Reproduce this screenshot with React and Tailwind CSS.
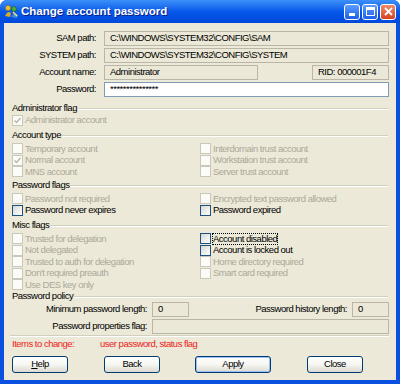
import clsx from "clsx";

const font = { fontFamily: '"Liberation Sans", Arial, sans-serif' };

function Field({ children, white, className }) {
  return (
    <div
      className={clsx(
        "flex h-[15px] items-center border pl-[5px] text-black",
        white ? "border-[#7f9db9] bg-white" : "border-[#b9b6a8] bg-[#ebe8d7]",
        className
      )}
    >
      {children}
    </div>
  );
}

function Check({ label, checked, disabled, focus }) {
  return (
    <div className="flex h-[11.5px] items-center">
      <span
        className={clsx(
          "flex h-[11px] w-[11px] shrink-0 items-center justify-center border",
          disabled
            ? "border-[#cac8bb] bg-[#fbfbf8]"
            : "border-[#1c5180] bg-gradient-to-br from-[#d8d8d2] to-white"
        )}
      >
        {checked ? (
          <svg width="7" height="7" viewBox="0 0 7 7">
            <path d="M0.5 3.5 L2.5 5.5 L6.5 1" fill="none" stroke={disabled ? "#b8b5a6" : "#21a121"} strokeWidth="1.4" />
          </svg>
        ) : null}
      </span>
      <span
        className={clsx(
          "ml-[2px] leading-[10px]",
          disabled ? "text-[#aca899]" : "text-black",
          focus && "outline outline-1 outline-dotted outline-offset-0 outline-black"
        )}
      >
        {label}
      </span>
    </div>
  );
}

function GroupHeader({ title, className }) {
  return (
    <div className={clsx("flex h-[11px] items-center pr-[1px]", className)}>
      <span className="text-black">{title}</span>
      <span className="ml-[1px] h-[2px] flex-1 border-t border-b border-t-[#d0d0bf] border-b-white" />
    </div>
  );
}

function XpButton({ children, wide, isDefault }) {
  return (
    <button
      className={clsx(
        "flex h-[17px] items-center justify-center rounded-[3px] border bg-gradient-to-b from-white via-[#f6f6f2] to-[#dcdad0] text-black",
        wide ? "w-[76px]" : "w-[56px]",
        isDefault ? "border-[#003c74] shadow-[inset_0_0_0_1px_#9fbef3]" : "border-[#003c74]"
      )}
    >
      {children}
    </button>
  );
}

function TitleIcon() {
  return (
    <svg width="15" height="15" viewBox="0 0 15 15">
      <circle cx="4" cy="4" r="2.6" fill="#e9c23c" stroke="#8a6a10" strokeWidth="0.6" />
      <path d="M1 12 Q4 6 7 9 L6 13 Z" fill="#d9a92c" />
      <circle cx="10" cy="5" r="2.4" fill="#4caf3a" stroke="#1d5f14" strokeWidth="0.6" />
      <path d="M7 13 Q10 7 14 11 L13 14 Z" fill="#3d8ad6" />
      <path d="M9 8 L13 12" stroke="#f4e27a" strokeWidth="1.4" />
    </svg>
  );
}

export default function App() {
  return (
    <div className="h-[384px] w-[400px] overflow-hidden text-[9.5px] tracking-[-0.5px]" style={font}>
      <div className="flex h-full flex-col rounded-t-[7px] bg-[#0a4fe0]">
        {/* title bar */}
        <div className="flex h-[23px] shrink-0 items-center rounded-t-[7px] bg-gradient-to-b from-[#3d8ff8] via-[#0758ea] to-[#0048da] pl-[4px] pr-[4px]">
          <TitleIcon />
          <span className="ml-[2px] text-[11.5px] font-bold tracking-[0px] text-white [text-shadow:1px_1px_0_#0a1f8a]">
            Change account password
          </span>
          <div className="ml-auto flex gap-[2px]">
            <span className="flex h-[16px] w-[16px] items-end justify-start rounded-[3px] border border-white bg-gradient-to-b from-[#5e9bff] to-[#1c5ee8] pb-[3px] pl-[4px]">
              <span className="h-[3px] w-[6px] bg-white" />
            </span>
            <span className="flex h-[16px] w-[16px] items-center justify-center rounded-[3px] border border-white bg-gradient-to-b from-[#5e9bff] to-[#1c5ee8]">
              <span className="h-[9px] w-[9px] border border-t-[3px] border-white" />
            </span>
            <span className="flex h-[16px] w-[16px] items-center justify-center rounded-[3px] border border-white bg-gradient-to-b from-[#ef8a6a] to-[#d5401c]">
              <svg width="9" height="9" viewBox="0 0 9 9">
                <path d="M1 1 L8 8 M8 1 L1 8" stroke="white" strokeWidth="1.8" />
              </svg>
            </span>
          </div>
        </div>

        {/* body */}
        <div className="mx-[4px] mb-[4px] flex flex-1 flex-col bg-[#ece9d8] pl-[8px] pr-[7px] pt-[8px]">
          {/* path fields */}
          <div className="grid grid-cols-[84px_1fr] gap-x-[8px] gap-y-[2px]">
            <span className="flex h-[15px] items-center justify-end text-black">SAM path:</span>
            <Field>C:\WINDOWS\SYSTEM32\CONFIG\SAM</Field>
            <span className="flex h-[15px] items-center justify-end text-black">SYSTEM path:</span>
            <Field>C:\WINDOWS\SYSTEM32\CONFIG\SYSTEM</Field>
            <span className="flex h-[15px] items-center justify-end text-black">Account name:</span>
            <div className="flex justify-between">
              <Field className="w-[154px]">Administrator</Field>
              <Field className="w-[77px]">RID: 000001F4</Field>
            </div>
            <span className="flex h-[15px] items-center justify-end text-black">Password:</span>
            <Field white>***************</Field>
          </div>

          <GroupHeader title="Administrator flag" className="mt-[6px]" />
          <div className="mt-[0.5px]">
            <Check label="Administrator account" checked disabled />
          </div>

          <GroupHeader title="Account type" className="mt-[4px]" />
          <div className="mt-[2px] grid grid-cols-[188px_1fr]">
            <Check label="Temporary account" disabled />
            <Check label="Interdomain trust account" disabled />
            <Check label="Normal account" checked disabled />
            <Check label="Workstation trust account" disabled />
            <Check label="MNS account" disabled />
            <Check label="Server trust account" disabled />
          </div>

          <GroupHeader title="Password flags" className="mt-[2.5px]" />
          <div className="mt-[2px] grid grid-cols-[188px_1fr]">
            <Check label="Password not required" disabled />
            <Check label="Encrypted text password allowed" disabled />
            <Check label="Password never expires" />
            <Check label="Password expired" />
          </div>

          <GroupHeader title="Misc flags" className="mt-[4px]" />
          <div className="mt-[2px] grid grid-cols-[188px_1fr]">
            <Check label="Trusted for delegation" disabled />
            <Check label="Account disabled" focus />
            <Check label="Not delegated" disabled />
            <Check label="Account is locked out" />
            <Check label="Trusted to auth for delegation" disabled />
            <Check label="Home directory required" disabled />
            <Check label="Don't required preauth" disabled />
            <Check label="Smart card required" disabled />
            <Check label="Use DES key only" disabled />
          </div>

          <GroupHeader title="Password policy" className="mt-[0.5px]" />
          <div className="mt-0 grid grid-cols-[135px_1fr] gap-x-[5px] gap-y-[2px]">
            <span className="flex h-[15px] items-center justify-end text-black">Minimum password length:</span>
            <div className="flex items-center">
              <Field className="w-[37px]">0</Field>
              <span className="ml-auto mr-[5px] text-black">Password history length:</span>
              <Field className="w-[37px]">0</Field>
            </div>
            <span className="flex h-[15px] items-center justify-end text-black">Password properties flag:</span>
            <Field />
          </div>

          <div className="ml-[-2px] mt-[1px] h-[2px] border-t border-b border-t-[#d0d0bf] border-b-white" />

          <div className="mt-[2px] flex h-[10px] items-center text-[#ec1c1c]">
            <span className="w-[88px]">Items to change:</span>
            <span>user password, status flag</span>
          </div>

          <div className="mt-[7px] flex items-center">
            <div className="ml-0">
              <XpButton>
                <span className="underline">H</span>elp
              </XpButton>
            </div>
            <div className="ml-[36px]">
              <XpButton>Back</XpButton>
            </div>
            <div className="ml-[35px]">
              <XpButton wide isDefault>Apply</XpButton>
            </div>
            <div className="ml-[36px]">
              <XpButton>Close</XpButton>
            </div>
          </div>
        </div>
      </div>
    </div>
  );
}
